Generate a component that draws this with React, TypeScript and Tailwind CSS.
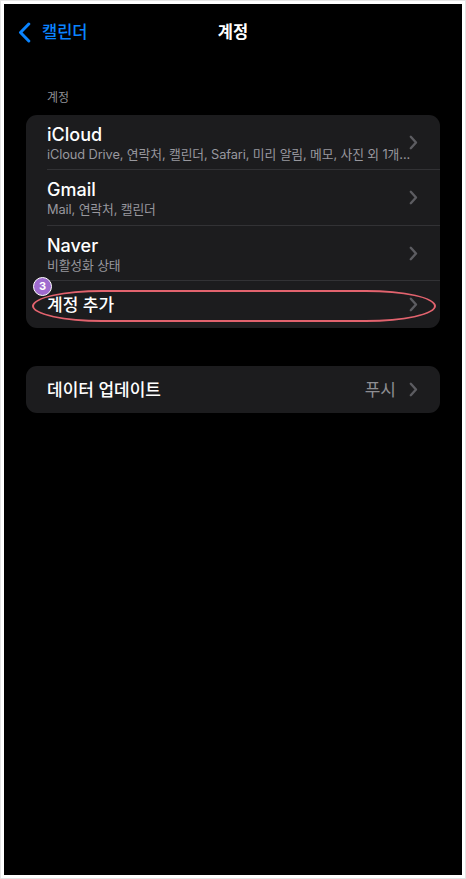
import React from "react";

const FONT = { fontFamily: 'Inter, "Noto Sans CJK KR", sans-serif' };

function Chevron() {
  return (
    <svg width="9" height="15" viewBox="0 0 9 15" fill="none">
      <path d="M1.8 1.8 L7 7.5 L1.8 13.2" stroke="#5c5c61" strokeWidth="2.4" strokeLinecap="round" strokeLinejoin="round" />
    </svg>
  );
}

function Row({ title, sub, h }: { title: string; sub: string; h: string }) {
  return (
    <div className={`flex items-center pl-[21px] pr-[22px] ${h}`}>
      <div className="flex min-w-0 flex-1 flex-col pt-[3px]">
        <div className="text-[18px] font-medium leading-[22px] text-white">{title}</div>
        <div className="whitespace-nowrap text-[12.8px] leading-[18px] tracking-[-0.1px] text-[#98989e]">{sub}</div>
      </div>
      <div className="ml-[4px] flex w-[9px] shrink-0 justify-end">
        <Chevron />
      </div>
    </div>
  );
}

function Divider() {
  return <div className="ml-[21px] h-px bg-[#323235]" />;
}

export default function App() {
  return (
    <div className="h-[879px] w-[466px] border border-[#e4e4e4] bg-white p-[3px]" style={FONT}>
      <div className="flex h-full w-full flex-col bg-black">
        {/* nav */}
        <div className="relative flex h-[56px] items-center pl-[14px]">
          <div className="flex items-center gap-[11px]">
            <svg width="13" height="21" viewBox="0 0 13 21" fill="none">
              <path d="M10.8 2 L2.5 10.5 L10.8 19" stroke="#0a84ff" strokeWidth="3" strokeLinecap="round" strokeLinejoin="round" />
            </svg>
            <span className="text-[16.5px] font-medium text-[#0a84ff]">캘린더</span>
          </div>
          <div className="pointer-events-none absolute inset-x-0 text-center text-[16.5px] font-semibold text-white">계정</div>
        </div>

        <div className="mt-[30px] pl-[43px] text-[12px] leading-[16px] text-[#8e8e93]">계정</div>

        <div className="mx-[22px] mt-[9px] flex flex-col rounded-[11px] bg-[#1c1c1e]">
          <Row h="h-[54px]" title="iCloud" sub="iCloud Drive, 연락처, 캘린더, Safari, 미리 알림, 메모, 사진 외 1개..." />
          <Divider />
          <Row h="h-[55px]" title="Gmail" sub="Mail, 연락처, 캘린더" />
          <Divider />
          <Row h="h-[54px]" title="Naver" sub="비활성화 상태" />
          <Divider />
          <div className="relative flex h-[47px] items-center pl-[21px] pr-[22px]">
            <span className="flex-1 pt-[3px] text-[17px] font-medium text-white">계정 추가</span>
            <Chevron />
            <div className="pointer-events-none absolute left-[6px] right-[4px] top-[9px] bottom-[6px] rounded-[70px/16px] border-2 border-[#e2636e]" />
            <div className="absolute left-[7px] top-[-4px] flex h-[19px] w-[19px] items-center justify-center rounded-full border-[1.5px] border-white bg-[#9f6bcf] text-[11px] font-bold text-white">
              3
            </div>
          </div>
        </div>

        <div className="mx-[22px] mt-[38px] flex h-[47px] items-center rounded-[11px] bg-[#1c1c1e] pl-[21px] pr-[22px]">
          <span className="flex-1 pt-[2px] text-[17px] font-medium text-white">데이터 업데이트</span>
          <span className="mr-[13px] pt-[2px] text-[17px] text-[#8e8e93]">푸시</span>
          <Chevron />
        </div>
      </div>
    </div>
  );
}
